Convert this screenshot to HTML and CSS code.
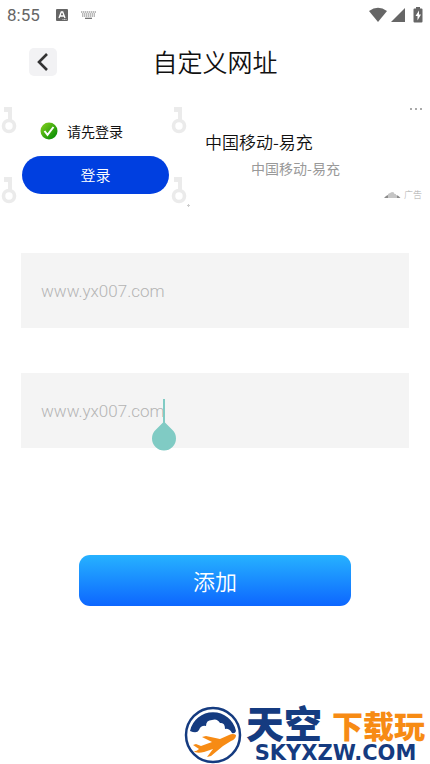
FILE: index.html
```html
<!DOCTYPE html>
<html lang="zh-CN">
<head>
    <meta charset="UTF-8">
    <meta name="viewport" content="width=device-width, initial-scale=1.0">
    <title>自定义网址</title>
    <link rel="stylesheet" href="styles.css">
</head>
<body>

<svg class="defs" width="0" height="0">
    <symbol id="key" viewBox="0 0 16 28">
        <path d="M3 1h8v14H7V6H3z"/>
        <circle cx="8" cy="20" r="5.500" fill="none" stroke="currentColor" stroke-width="3.600"/>
    </symbol>
</svg>

<div class="screen">
    <!-- 状态栏 -->
    <div class="status-bar">
        <span class="time">8:55</span>
        <svg width="12" height="12" viewBox="0 0 12 12">
            <rect width="12" height="12" rx="1" fill="#666"/>
            <path d="M3 9l2.300-6h1.400L9 9M4 7h4" fill="none" stroke="#fff" stroke-width="1.300"/>
            <path d="M6.500 10.500h4" stroke="#ccc" stroke-dasharray="1 .5"/>
        </svg>
        <svg class="keyboard" width="16" height="8" viewBox="0 0 16 8">
            <path d="M0 1h15M1 3h13M1 5h13" stroke="#777" stroke-width="1.200" stroke-dasharray="1.400 .6"/>
            <path d="M4 7.300h7" stroke="#666" stroke-width="1.200"/>
        </svg>
        <div class="signals">
            <svg width="20" height="16" viewBox="0 0 20 16">
                <path d="M1 4Q10-2.500 19 4L10 15z" fill="#666"/>
            </svg>
            <svg width="14" height="14" viewBox="0 0 14 14">
                <path d="M14 0v14H0z" fill="#666"/>
            </svg>
            <svg class="battery" width="10" height="16" viewBox="0 0 10 16">
                <path d="M3 0h4v1.500h1.500Q9.500 1.500 9.500 2.500v12q0 1-1 1h-7q-1 0-1-1v-12q0-1 1-1H3z" fill="#666"/>
                <path d="M6 3.500L2.500 9h2v4.500L8 7.500H6z" fill="#fff"/>
            </svg>
        </div>
    </div>

    <header class="header">
        <button type="button" class="back" aria-label="返回">
            <svg width="28" height="28" viewBox="0 0 28 28">
                <path d="M18 6l-8 8 8 8" fill="none" stroke="#333" stroke-width="2.600"/>
            </svg>
        </button>
        <h1>自定义网址</h1>
    </header>

    <!-- 广告 -->
    <section class="ad">
        <div class="ad-login">
            <div class="keys">
                <svg width="16" height="28"><use href="#key"/></svg>
                <svg width="16" height="28"><use href="#key"/></svg>
            </div>
            <div class="login">
                <p>
                    <svg width="18" height="18" viewBox="0 0 18 18">
                        <defs>
                            <linearGradient id="green" x1="0" y1="0" x2="1" y2="1">
                                <stop offset=".2" stop-color="#6cc318"/>
                                <stop offset=".8" stop-color="#149407"/>
                            </linearGradient>
                        </defs>
                        <circle cx="9" cy="9" r="8.500" fill="url(#green)"/>
                        <path d="M4.500 9l3 3.800L13.500 5" fill="none" stroke="#fff" stroke-width="2"/>
                    </svg>
                    请先登录
                </p>
                <button type="button" class="login-btn">登录</button>
            </div>
            <div class="keys">
                <svg width="16" height="28"><use href="#key"/></svg>
                <svg width="16" height="28"><use href="#key"/></svg>
            </div>
            <svg class="dot" width="3" height="3" viewBox="0 0 3 3">
                <path d="M0 1.500h3M1.500 0v3" stroke="#ccc"/>
            </svg>
        </div>
        <div class="ad-text">
            <button type="button" class="more" aria-label="更多">
                <svg width="12" height="2" viewBox="0 0 12 2">
                    <path d="M0 0h2v2H0zM5 0h2v2H5zM10 0h2v2h-2z" fill="#aaa"/>
                </svg>
            </button>
            <h2>中国移动-易充</h2>
            <p>中国移动-易充</p>
            <div class="ad-mark">
                <svg width="17" height="6" viewBox="0 0 17 6">
                    <path d="M0 6l2-2 2-1v3zM4.500 2l1-1v5h-1zM6.500 1l1-1v6h-1zM8.500 0l1 .6V6h-1zM10.500 1.500l1 .7V6h-1zM12.500 3l2 1 2 2h-4z" fill="#8c8c8c"/>
                </svg>
                广告
            </div>
        </div>
    </section>

    <form class="url-form">
        <div class="field">
            <input type="text" placeholder="www.yx007.com" aria-label="名称">
        </div>
        <div class="field">
            <input type="text" placeholder="www.yx007.com" aria-label="网址">
            <svg class="cursor" width="24" height="52" viewBox="0 0 24 52">
                <path d="M11 0h2v24h-2z"/>
                <path d="M12 22.500l8.500 8.500a12 12 0 1 1-17 0z"/>
            </svg>
        </div>
        <button type="button" class="add">添加</button>
    </form>

    <footer class="brand">
        <svg width="58" height="58" viewBox="0 0 58 58">
            <circle cx="29" cy="29" r="27" fill="#fff" stroke="#153b80" stroke-width="2.500"/>
            <path d="M6 25A23.500 23.500 0 0 1 52 25Q51 28 48 27Q45 22 41 23Q41 16 36 17Q33 12 28 14Q22 14 22 20Q17 19 15 24Q13 28 6 25z" fill="#153b80"/>
            <path d="M52 29Q49 27 45 29L36 33 22 30 18 31 28 36 17 40 12 38 9 39 15 43Q12 46 9 45Q13 48 20 46L29 43 23 51 27 50 39 40 47 35Q52 33 52 29z" fill="#f78b14"/>
        </svg>
        <div class="brand-text">
            <div class="brand-name"><span class="sky">天空</span><span class="play">下载玩</span></div>
            <div class="brand-url">SKYXZW.COM</div>
        </div>
    </footer>
</div>

</body>
</html>
```
FILE: styles.css
```css
* {
    box-sizing: border-box;
}
body {
    font-family: Roboto, "Noto Sans CJK SC", sans-serif;
    background-color: #fff;
    color: #111;
    margin: 0;
}
h1, h2, p {
    margin: 0;
    font-weight: normal;
}
button {
    border: 0;
    padding: 0 0 2px;
    font-family: inherit;
    cursor: pointer;
}
svg {
    display: block;
}
.defs {
    position: absolute;
}
.screen {
    display: flex;
    flex-direction: column;
    min-height: 100vh;
}
.status-bar {
    display: flex;
    align-items: center;
    height: 30px;
    padding: 0 7px;
    color: #666;
}
.time {
    width: 49px;
    font-size: 17px;
}
.keyboard {
    margin-left: 13px;
}
.signals {
    display: flex;
    align-items: center;
    gap: 3px;
    margin-left: auto;
}
.battery {
    margin-left: 5px;
}
.header {
    display: grid;
    grid-template-columns: 28px 1fr 28px;
    align-items: center;
    height: 64px;
    padding: 0 29px;
}
.back {
    width: 28px;
    height: 28px;
    padding: 0;
    border-radius: 5px;
    background-color: #f2f2f4;
}
.header h1 {
    padding-bottom: 2px;
    text-align: center;
    font-family: "Noto Sans CJK SC", sans-serif;
    font-size: 25px;
    font-weight: 350;
    line-height: 36px;
}
.ad {
    display: flex;
    height: 110px;
    margin-top: 8px;
    font-family: "Noto Sans CJK SC", sans-serif;
}
.ad-login {
    position: relative;
    display: flex;
    padding: 4px 0 6px 1px;
}
.keys {
    display: flex;
    flex-direction: column;
    gap: 42px;
    color: #ebebeb;
    fill: currentColor;
}
.login {
    width: 147px;
    margin: 0 2px 0 5px;
}
.login p {
    display: flex;
    align-items: center;
    gap: 9px;
    height: 50px;
    padding: 0 0 1px 18px;
    font-size: 14px;
}
.login-btn {
    width: 100%;
    height: 38px;
    border-radius: 19px;
    background-color: #003fe0;
    color: #fff;
    font-size: 15px;
    font-weight: 350;
}
.dot {
    position: absolute;
    right: -3px;
    bottom: 5px;
}
.ad-text {
    display: flex;
    flex: 1;
    flex-direction: column;
    padding: 6px 8px 0 18px;
}
.more {
    align-self: flex-end;
    background: none;
}
.ad-text h2 {
    margin-top: 17px;
    font-size: 17px;
    font-weight: 350;
    line-height: 26px;
}
.ad-text p {
    padding-right: 36px;
    color: #999;
    font-size: 14px;
    line-height: 26px;
    text-align: center;
}
.ad-mark {
    display: flex;
    align-items: center;
    align-self: flex-end;
    gap: 3px;
    margin-top: 7px;
    color: #aaa;
    font-size: 9px;
    font-weight: 300;
    line-height: 14px;
}
.url-form {
    display: flex;
    flex-direction: column;
    gap: 45px;
    padding: 41px 21px 30px;
}
.field {
    position: relative;
}
.field input {
    display: block;
    width: 100%;
    height: 75px;
    padding: 0 20px;
    border: 0;
    border-radius: 0;
    background-color: #f4f4f4;
    font-family: Roboto, sans-serif;
    font-size: 17px;
    font-weight: 300;
}
.field input::placeholder {
    color: #b5b5b5;
}
.cursor {
    position: absolute;
    top: 26px;
    left: 131px;
    fill: #80cbc4;
}
.add {
    height: 51px;
    margin: 62px 58px 0;
    border-radius: 11px;
    background: linear-gradient(#26b2ff, #0d66ff);
    color: #fff;
    font-family: "Noto Sans CJK SC", sans-serif;
    font-size: 22px;
    font-weight: 350;
}
.brand {
    display: flex;
    align-items: flex-end;
    gap: 4px;
    align-self: flex-end;
    margin-top: auto;
    padding-right: 5px;
}
.brand-name {
    display: flex;
    align-items: flex-end;
    justify-content: space-between;
    height: 40px;
    font-family: "Noto Sans CJK SC", sans-serif;
    font-weight: 900;
}
.brand-text {
    width: 179px;
}
.sky {
    color: #153b80;
    font-size: 38px;
    line-height: 40px;
}
.play {
    color: #f78b14;
    font-size: 31px;
    line-height: 34px;
}
.brand-url {
    color: #153b80;
    font-family: "DejaVu Sans", sans-serif;
    font-size: 21px;
    font-weight: bold;
    line-height: 22px;
    text-align: center;
}
```
